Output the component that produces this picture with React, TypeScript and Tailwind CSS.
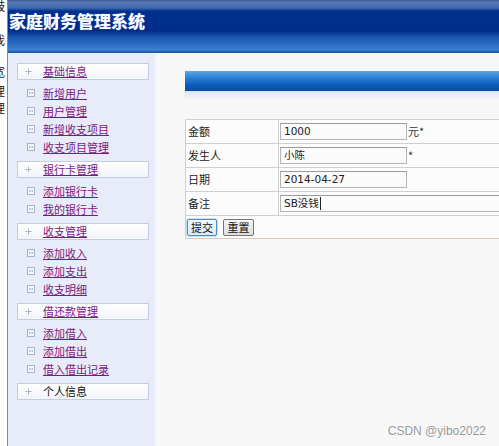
const cjk = "font-['Noto_Sans_CJK_SC',sans-serif]";

const groups = [
  { title: "基础信息", items: ["新增用户", "用户管理", "新增收支项目", "收支项目管理"] },
  { title: "银行卡管理", items: ["添加银行卡", "我的银行卡"] },
  { title: "收支管理", items: ["添加收入", "添加支出", "收支明细"] },
  { title: "借还款管理", items: ["添加借入", "添加借出", "借入借出记录"] },
  { title: "个人信息", items: [] as string[], plain: true },
];

function PlusIcon() {
  return (
    <svg width="7" height="7" viewBox="0 0 7 7" className="shrink-0">
      <path d="M3.5 0.5v6M0.5 3.5h6" stroke="#a9b4c4" strokeWidth="1" />
    </svg>
  );
}

function LeafIcon() {
  return (
    <svg width="8" height="8" viewBox="0 0 8 8" className="shrink-0">
      <rect x="0.5" y="0.5" width="7" height="7" fill="#f4f6fa" stroke="#a6b2c6" />
      <path d="M2 4h1M3.5 4h1M5 4h1" stroke="#7d8aa0" strokeWidth="1" />
    </svg>
  );
}

function Sidebar() {
  return (
    <div className={`w-[150px] shrink-0 bg-[#e7ecf8] border-r-[3px] border-[#f3f6fc] pt-[10px] ${cjk}`}>
      {groups.map((g, gi) => (
        <div key={g.title} className={gi > 0 ? "mt-[5px]" : ""}>
          <div className="ml-[9px] w-[132px] h-[17px] flex items-center border border-[#c3cde0] bg-[linear-gradient(#ffffff,#f1f4fa)] pl-[7px]">
            <PlusIcon />
            <span
              className={`ml-[11px] text-[11px] leading-none ${
                g.plain ? "text-[#111]" : "text-[#7c1b7f] underline"
              }`}
            >
              {g.title}
            </span>
          </div>
          {g.items.length > 0 && (
            <div className="pt-[4px]">
              {g.items.map((it) => (
                <div key={it} className="h-[18px] flex items-center pl-[19px]">
                  <LeafIcon />
                  <span className="ml-[8px] text-[11px] leading-none text-[#7c1b7f] underline">{it}</span>
                </div>
              ))}
            </div>
          )}
        </div>
      ))}
    </div>
  );
}

const rows = [
  { label: "金额", value: "1000", after: "元*" },
  { label: "发生人", value: "小陈", after: "*" },
  { label: "日期", value: "2014-04-27", after: "" },
  { label: "备注", value: "SB没钱", after: "", wide: true },
];

function MainArea() {
  return (
    <div className="flex-1 bg-[#f7f7f7] pt-[18px] pl-[27px] overflow-hidden">
      <div className="h-[20px] bg-[linear-gradient(#5aa8e6,#2a7fd2_35%,#0d5cbd_70%,#0a4aa6)]" />
      <div className="h-[9px] bg-[linear-gradient(#d9e6f6,#f7f7f7)]" />
      <div className="mt-[19px] w-[380px] border-l border-t border-[#cfcfcf] bg-[#fcfcfc]">
        {rows.map((r) => (
          <div key={r.label} className="flex h-[24px] border-b border-[#cfcfcf]">
            <div className={`w-[93px] shrink-0 border-r border-[#cfcfcf] flex items-center pl-[2px] text-[11px] text-[#222] ${cjk}`}>
              {r.label}
            </div>
            <div className="flex-1 flex items-center pl-[1px]">
              <div
                className={`${r.wide ? "flex-1" : "w-[127px]"} h-[17px] border border-[#b5b5b5] border-t-[#9a9a9a] bg-[#fbfbfb] flex items-center pl-[3px] text-[10.5px] text-[#222] font-['DejaVu_Sans','Noto_Sans_CJK_SC',sans-serif]`}
              >
                {r.value}
                {r.wide && <span className="ml-[1px] h-[13px] w-px bg-[#222]" />}
              </div>
              {r.after && (
                <span className={`ml-[1px] text-[11px] text-[#333] ${cjk}`}>{r.after}</span>
              )}
            </div>
          </div>
        ))}
        <div className={`h-[23px] flex items-center gap-[6px] pl-[1px] border-b border-[#dccab9] ${cjk}`}>
          <button className="w-[30px] h-[17px] rounded-[2px] border border-[#4b8fc4] bg-[linear-gradient(#f4f8fc,#dce8f3)] text-[11px] leading-none text-[#111] shadow-[0_0_0_1px_#bfe0f5]">
            提交
          </button>
          <button className="w-[31px] h-[17px] rounded-[2px] border border-[#767676] bg-[linear-gradient(#f6f6f6,#dedede)] text-[11px] leading-none text-[#111]">
            重置
          </button>
        </div>
      </div>
    </div>
  );
}

export default function App() {
  return (
    <div className="relative w-[499px] h-[446px] flex overflow-hidden bg-white">
      <div className={`w-[8px] shrink-0 border-r border-[#8a8a8a] overflow-hidden bg-white ${cjk}`}>
        <div className="-ml-[7px] flex flex-col text-[12px] leading-none text-[#222]">
          <span className="mt-[0px]">鼓</span>
          <span className="mt-[22px]">我</span>
          <span className="mt-[20px]">宽</span>
          <span className="mt-[7px]">理</span>
          <span className="mt-[5px]">理</span>
        </div>
      </div>
      <div className="flex-1 flex flex-col">
        <div className="h-[53px] shrink-0 flex items-start bg-[linear-gradient(#3b5485_0px,#5679b8_2px,#3f68ae_8px,#00308f_11px,#002d8c_31px,#1a56ae_37px,#2a6cc2_44px,#3b82d3_50px,#2356a8_52px)]">
          <span className={`mt-[11px] ml-[1px] text-[17px] leading-[20px] font-bold text-white tracking-[0px] ${cjk} [text-shadow:0_0_1px_#9fb6e6]`}>
            家庭财务管理系统
          </span>
        </div>
        <div className="flex-1 flex">
          <Sidebar />
          <MainArea />
        </div>
      </div>
      <div className="absolute right-[13px] bottom-[9px] text-[12px] leading-none text-[#9a9a9a] font-['Liberation_Sans',sans-serif] [text-shadow:0_0_2px_#ffffff]">
        CSDN @yibo2022
      </div>
    </div>
  );
}
